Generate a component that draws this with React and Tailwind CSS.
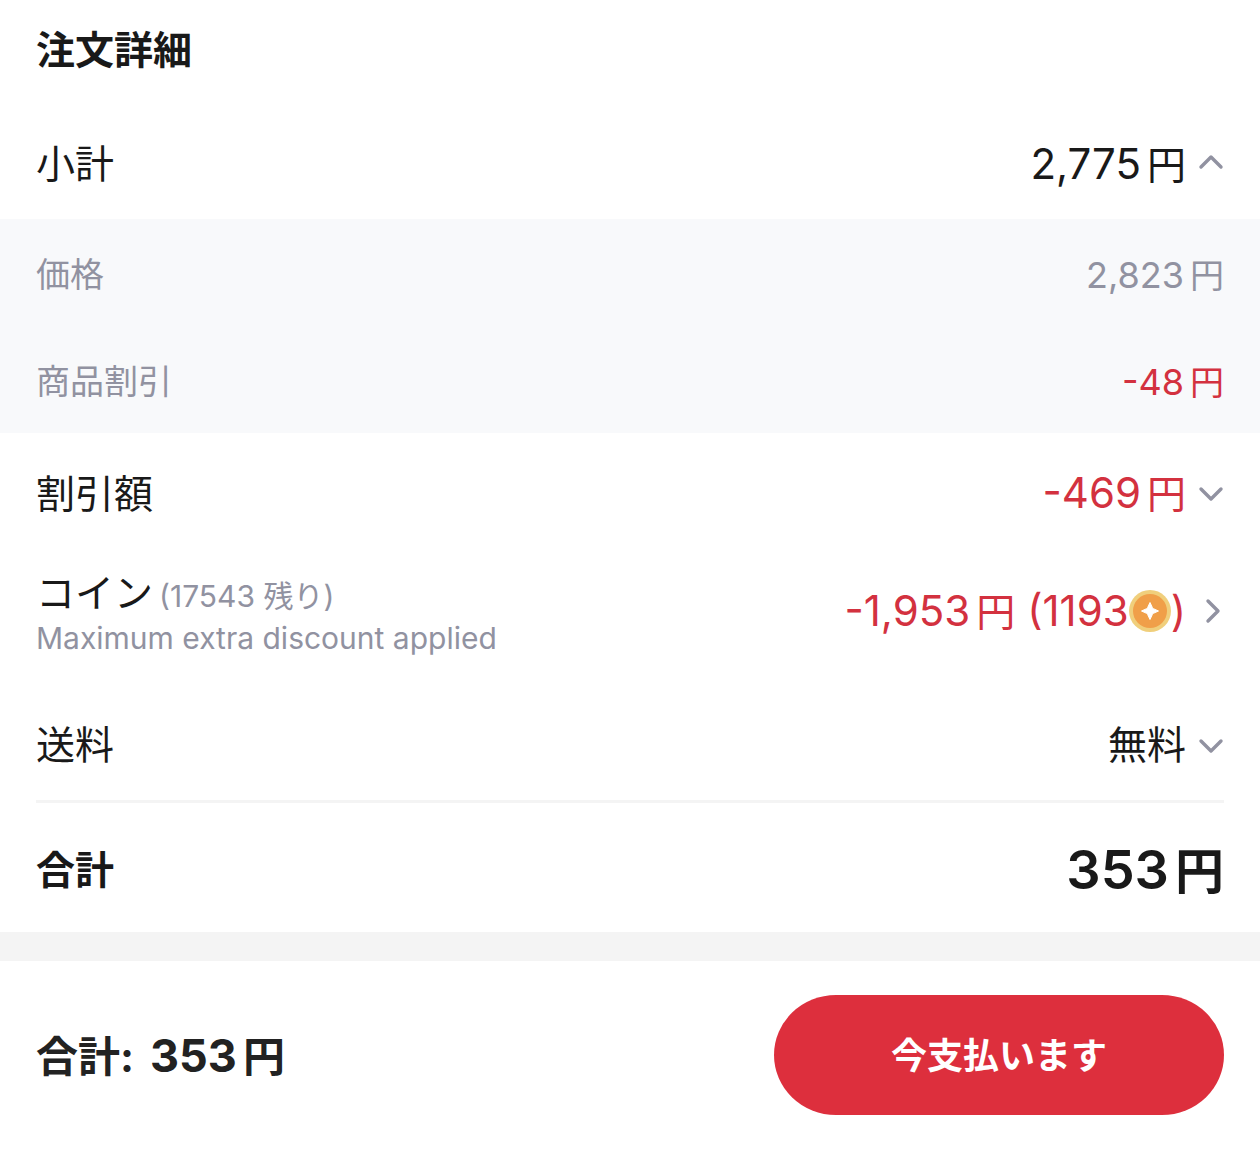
import React, { useState } from "react";

const chevronPaths = {
  up: "M3 16 L13 6 L23 16",
  down: "M3 9 L13 19 L23 9",
  right: "M10 3 L20 13 L10 23",
};

const Chevron = ({ direction }) => (
  <svg viewBox="0 0 26 26" className="size-[26px] shrink-0 text-[#9192a1]" fill="none" stroke="currentColor" strokeWidth="3.4" strokeLinecap="round" strokeLinejoin="round" aria-hidden="true">
    <path d={chevronPaths[direction]} />
  </svg>
);

const Coin = () => (
  <svg viewBox="0 0 42 42" className="size-[42px] shrink-0" aria-hidden="true">
    <circle cx="21" cy="21" r="21" fill="#f0cf7c" />
    <circle cx="21" cy="21" r="17" fill="#f09f49" />
    <path d="M21 12.5 L23.4 17.6 Q23.8 18.3 24.5 18.7 L29.5 21 L24.5 23.3 Q23.8 23.7 23.4 24.4 L21 29.5 L18.6 24.4 Q18.2 23.7 17.5 23.3 L12.5 21 L17.5 18.7 Q18.2 18.3 18.6 17.6 Z" fill="#fff" stroke="#fff" strokeWidth="1" strokeLinejoin="round" />
  </svg>
);

// The unit is set a little smaller than the digits
const Yen = ({ value, unitClass = "text-[39px]" }) => (
  <span className="flex items-baseline gap-1.5">
    <span>{value}</span>
    <span className={unitClass}>円</span>
  </span>
);

const App = () => {
  const [showSubtotal, setShowSubtotal] = useState(true);

  return (
    <div className="bg-white font-[Inter,'Noto_Sans_CJK_JP',sans-serif] leading-none text-[#191919]">
      <main>
        <h1 className="px-9 pt-[18px] pb-[26px] text-[39px] leading-16 font-bold">注文詳細</h1>

        <button type="button" onClick={() => setShowSubtotal(!showSubtotal)} aria-expanded={showSubtotal} className="flex min-h-[111px] w-full items-center justify-between px-9">
          <span className="text-[39px]">小計</span>
          <span className="flex items-center gap-3 text-[42px]">
            <Yen value="2,775" />
            <Chevron direction={showSubtotal ? "up" : "down"} />
          </span>
        </button>

        {/* Breakdown */}
        {showSubtotal && (
          <div className="bg-[#f8f9fb] text-[#9192a1]">
            <div className="flex min-h-[107px] items-center justify-between px-9 pt-1">
              <span className="text-[34px]">価格</span>
              <span className="text-[36px]">
                <Yen value="2,823" unitClass="text-[34px]" />
              </span>
            </div>
            <div className="flex min-h-[107px] items-center justify-between px-9 pt-1">
              <span className="text-[34px]">商品割引</span>
              <span className="text-[36px] text-[#d3313f]">
                <Yen value="-48" unitClass="text-[34px]" />
              </span>
            </div>
          </div>
        )}

        <button type="button" className="flex min-h-[120px] w-full items-center justify-between px-9">
          <span className="text-[39px]">割引額</span>
          <span className="flex items-center gap-3 text-[42px] text-[#d3313f]">
            <Yen value="-469" />
            <Chevron direction="down" />
          </span>
        </button>

        {/* Coins */}
        <button type="button" className="flex min-h-[120px] w-full items-center justify-between px-9 text-left">
          <span className="flex flex-col pt-0.5">
            <span className="flex items-baseline gap-1.5 text-[39px] leading-12">
              コイン
              <span className="text-[30px] leading-none text-[#9192a1]">(17543 残り)</span>
            </span>
            <span className="text-[30px] leading-[42px] text-[#9192a1]">Maximum extra discount applied</span>
          </span>
          <span className="flex items-center gap-3 pb-1 text-[42px] text-[#d3313f]">
            <span className="flex items-center">
              <Yen value="-1,953" />
              <span className="ml-3">(1193</span>
              <Coin />
              <span>)</span>
            </span>
            <Chevron direction="right" />
          </span>
        </button>

        <button type="button" className="mt-4 flex min-h-[111px] w-full items-center justify-between px-9">
          <span className="text-[39px]">送料</span>
          <span className="flex items-center gap-3 text-[39px]">
            無料
            <Chevron direction="down" />
          </span>
        </button>

        <div className="mx-9 flex min-h-[132px] items-center justify-between border-t-3 border-[#f4f4f4] pt-1 font-bold">
          <span className="text-[39px]">合計</span>
          <span className="text-[54px] font-semibold">
            <Yen value="353" unitClass="text-[49px]" />
          </span>
        </div>
      </main>

      {/* Pay bar */}
      <footer className="flex items-center justify-between border-t-29 border-[#f4f4f4] px-9 pt-[34px] pb-9 text-[#222]">
        <p className="flex items-baseline gap-4 text-[42px] font-bold">
          <span>合計:</span>
          <span className="text-[45px]">
            <Yen value="353" unitClass="text-[42px] font-semibold" />
          </span>
        </p>
        <button type="button" className="h-30 w-[450px] rounded-[62px/60px] bg-[#dd2f3d] pt-0.5 text-[36px] font-semibold text-white">
          今支払います
        </button>
      </footer>
    </div>
  );
};

export default App;
